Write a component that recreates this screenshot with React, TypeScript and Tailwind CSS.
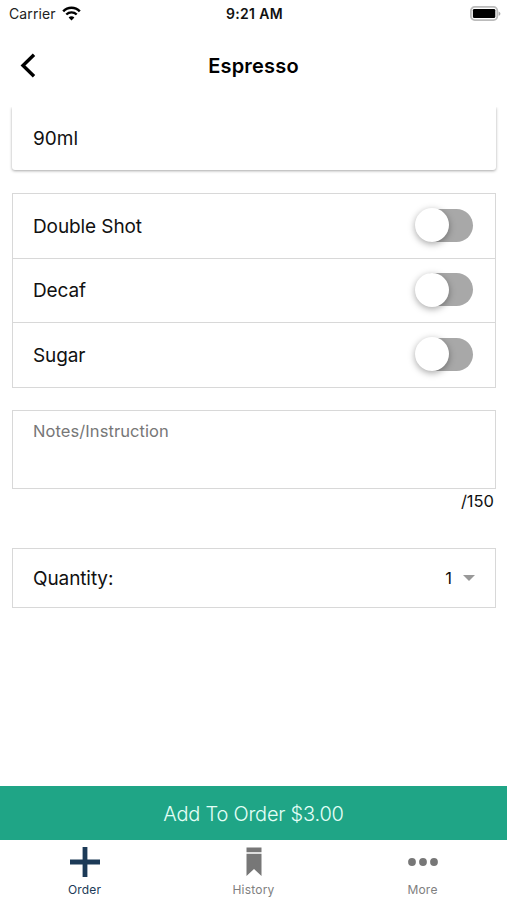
const options = ["Double Shot", "Decaf", "Sugar"];

const StatusBar = () => {
  return (
    <div className="grid grid-cols-3 items-center h-7 pl-[9px] pr-[7px] text-[14px] leading-none">
      <div className="flex items-center gap-[6px] text-[#222]">
        <span className="tracking-[0.1px]">Carrier</span>
        <svg className="-mt-[2px]" width="19" height="15" viewBox="0 0 19 15" fill="none">
          <path d="M1.2 5.3C5.8 0.6 13.2 0.6 17.8 5.3" stroke="#000" strokeWidth="2.5" />
          <path d="M4.3 8.5C7.2 5.7 11.8 5.7 14.7 8.5" stroke="#000" strokeWidth="2.4" />
          <path d="M9.5 14.4L6.6 11.4C8.2 9.9 10.8 9.9 12.4 11.4Z" fill="#000" />
        </svg>
      </div>
      <span className="text-center font-semibold tracking-[0.35px] text-[#111] whitespace-nowrap">
        9:21 AM
      </span>
      <svg className="justify-self-end -mt-[1px] -mr-[1px]" width="31" height="15" viewBox="0 0 31 15">
        <rect x="0.9" y="0.9" width="26.4" height="13.2" rx="3.8" fill="#fff" stroke="#bbb" strokeWidth="1.8" />
        <rect x="2.9" y="2.9" width="22.4" height="9.2" rx="1.4" fill="#000" />
        <path d="M28.6 5.4C31 6.2 31 8.9 28.6 9.7Z" fill="#aaa" />
      </svg>
    </div>
  );
};

const Header = () => {
  return (
    <header className="relative flex items-center justify-center h-[79px] pb-[4px]">
      <button className="absolute left-[20px] top-[25px]" aria-label="Back">
        <svg width="16" height="25" viewBox="0 0 16 25" fill="none">
          <path d="M14 1.8L3 12.5L14 23.2" stroke="#000" strokeWidth="3.4" />
        </svg>
      </button>
      <h1 className="text-[20px] font-semibold tracking-[0.2px] text-black">Espresso</h1>
    </header>
  );
};

const Toggle = () => {
  return (
    <span className="flex items-center w-[58px] h-[34px] mb-[2px]">
      <span className="flex items-center w-[56px] h-[33px] ml-[2px] rounded-full bg-[#a8a8a8]">
        <span className="w-[34px] h-[34px] -ml-[2px] shrink-0 rounded-full bg-white shadow-[0_2px_7px_rgba(0,0,0,0.35)]" />
      </span>
    </span>
  );
};

const App = () => {
  return (
    <div className="flex flex-col w-full h-screen overflow-hidden bg-white text-[#111] font-['Inter','Liberation_Sans',sans-serif]">
      <StatusBar />
      <Header />
      <main className="flex-1 overflow-hidden pl-3 pr-[11px]">
        <div className="flex items-center h-[63px] pl-[21px] pt-[2px] rounded-b-[3px] text-[19px] shadow-[0_1px_3px_rgba(0,0,0,0.35)]">
          90ml
        </div>
        <div className="mt-[23px] border border-[#d8d8d8]">
          {options.map((name, i) => (
            <div
              key={name}
              className={`flex items-center justify-between pl-[20px] pr-[22px] ${
                i === 1 ? "h-[65px] border-y border-[#d8d8d8]" : "h-[64px]"
              }`}
            >
              <span className="pt-[2px] text-[19px] tracking-[-0.1px]">{name}</span>
              <Toggle />
            </div>
          ))}
        </div>
        <div className="h-[79px] mt-[22px] pl-[20px] pt-[9px] border border-[#d8d8d8] text-[16.5px] leading-[22px] tracking-[0.08px] text-[#777]">
          Notes/Instruction
        </div>
        <p className="h-[59px] pr-[2px] text-right text-[16.5px] leading-[24px]">/150</p>
        <div className="flex items-center justify-between h-[60px] pl-[20px] pr-[20px] border border-[#d8d8d8]">
          <span className="pt-[2px] text-[19px] tracking-[-0.1px]">Quantity:</span>
          <span className="flex items-center gap-[11px] text-[16.5px]">
            1
            <svg width="12" height="6" viewBox="0 0 12 6">
              <path d="M0 0H12L6 6Z" fill="#999" />
            </svg>
          </span>
        </div>
      </main>
      <button className="h-[54px] shrink-0 pt-[1px] bg-[#1fa586] text-[#e4fff7] text-[20px] font-light tracking-[-0.22px]">
        Add To Order $3.00
      </button>
      <nav className="grid grid-cols-3 h-[60px] shrink-0 text-[12px] leading-[16px] text-[#808080]">
        <div className="flex flex-col items-center pt-[7px] gap-[5px] text-[#1c3a57]">
          <svg width="30" height="30" viewBox="0 0 30 30">
            <path d="M12.6 0H17.4V12.6H30V17.4H17.4V30H12.6V17.4H0V12.6H12.6Z" fill="#1c3a57" />
          </svg>
          <span className="tracking-[0.15px]">Order</span>
        </div>
        <div className="flex flex-col items-center pt-[7px] gap-[5px]">
          <svg width="16" height="30" viewBox="0 0 16 30">
            <path d="M0.5 0.5H15.5V5.3H0.5ZM0.5 6.8H15.5V29L8 22L0.5 29Z" fill="#777" />
          </svg>
          <span className="tracking-[0.2px]">History</span>
        </div>
        <div className="flex flex-col items-center pt-[7px] gap-[5px]">
          <svg width="30" height="30" viewBox="0 0 30 30" fill="#777">
            <circle cx="4" cy="15" r="3.9" />
            <circle cx="15" cy="15" r="3.9" />
            <circle cx="26" cy="15" r="3.9" />
          </svg>
          <span className="tracking-[0.2px]">More</span>
        </div>
      </nav>
    </div>
  );
};

export default App;
